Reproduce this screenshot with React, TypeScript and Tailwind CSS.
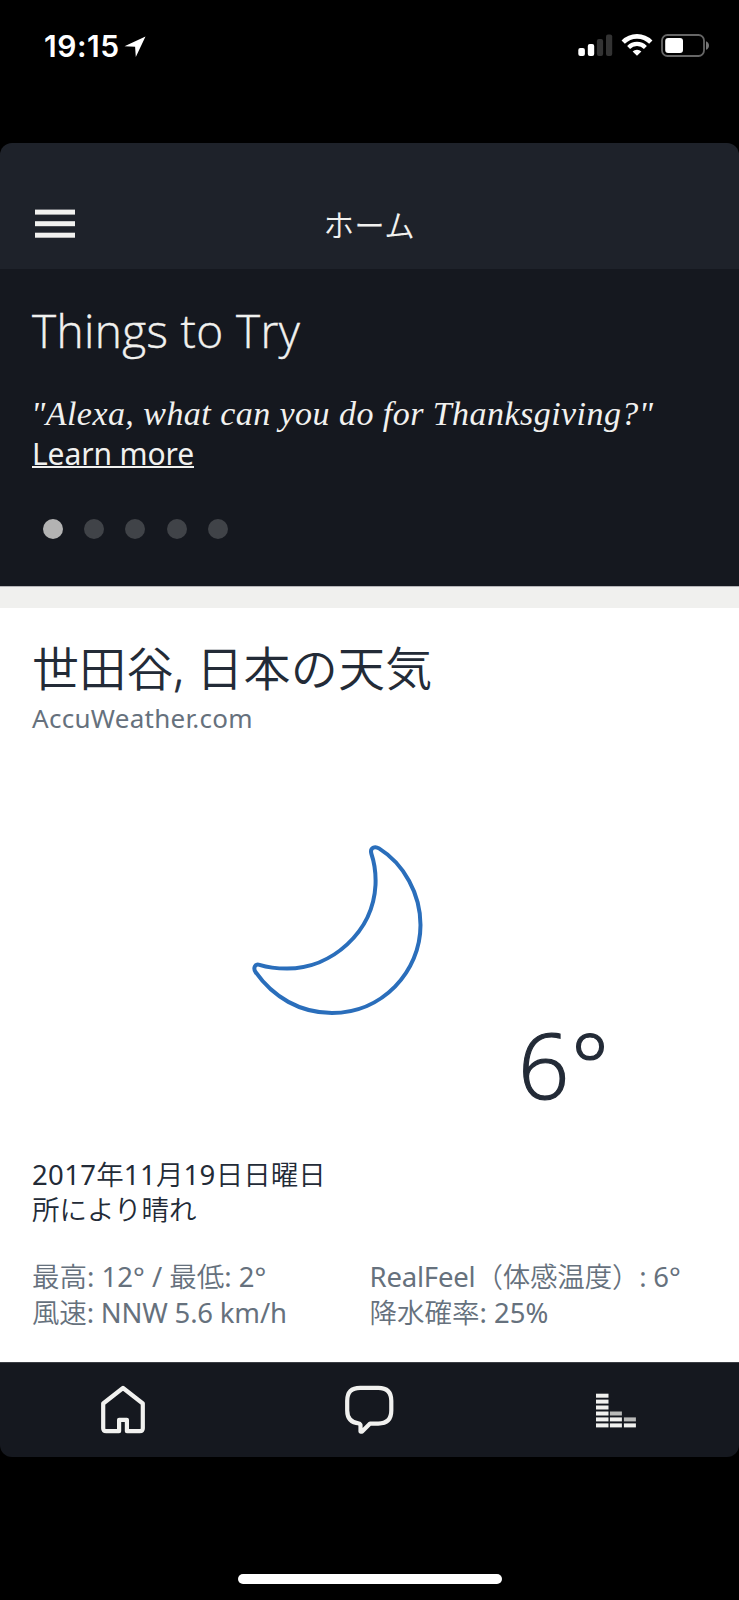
import React from "react";

const ember = "font-['Noto_Sans','Noto_Sans_CJK_JP',sans-serif]";
const light = "font-['Open_Sans','Noto_Sans_CJK_JP',sans-serif] font-[350]";

function StatusBar() {
  return (
    <div className="flex h-[143px] items-start justify-between pt-[34px] pr-[28px] pl-[44px]">
      <div className="flex items-center gap-[4px]">
        <span className="font-['Inter',sans-serif] text-[30px] leading-[24px] font-semibold tracking-[0.5px] text-white">
          19:15
        </span>
        <svg width="22" height="22" viewBox="0 0 22 22" fill="#fff">
          <path d="M21.5 1.5 11.8 22 11.1 11.8 0.5 11.2Z" />
        </svg>
      </div>
      <div className="flex items-start">
        <svg width="36" height="23" viewBox="0 0 36 23">
          <rect x="0.3" y="14" width="6.6" height="8" rx="2" fill="#fff" />
          <rect x="9.8" y="10" width="6.4" height="12" rx="2" fill="#fff" />
          <rect x="18.9" y="5" width="6.2" height="17" rx="2" fill="#333" />
          <rect x="28" y="0.6" width="6.2" height="21.4" rx="2" fill="#333" />
        </svg>
        <svg className="ml-[7px]" width="32" height="23" viewBox="0 0 32 23" fill="none" stroke="#fff">
          <path d="M2.2 8.2A19.3 19.3 0 0 1 29.8 8.2" strokeWidth="4.6" />
          <path d="M7.6 13.4A12 12 0 0 1 24.4 13.4" strokeWidth="4.2" />
          <path d="M16 21.8 11.6 17.5A6.2 6.2 0 0 1 20.4 17.5Z" fill="#fff" stroke="none" />
        </svg>
        <svg className="ml-[8px]" width="50" height="23" viewBox="0 0 50 23">
          <rect x="1" y="1" width="42" height="21" rx="5.5" fill="none" stroke="#666" strokeWidth="1.8" />
          <rect x="4.2" y="4" width="17.8" height="15" rx="3" fill="#fff" />
          <path d="M45 7.2c4 1.4 4 7.2 0 8.6Z" fill="#777" />
        </svg>
      </div>
    </div>
  );
}

function Header() {
  return (
    <header className="flex h-[126px] items-start bg-[#1e222a] pt-[66px] pl-[35px]">
      <svg width="40" height="30" viewBox="0 0 40 30" fill="#f1f1ef">
        <rect y="0.6" width="40" height="5" />
        <rect y="12.2" width="40" height="5" />
        <rect y="23.7" width="40" height="5" />
      </svg>
      <h1 className={`${light} ml-[248.5px] text-[30.5px] leading-[32px] tracking-[0.3px] whitespace-nowrap text-[#f1f1ef]`}>
        ホーム
      </h1>
    </header>
  );
}

function ThingsToTry() {
  return (
    <section className="h-[317px] bg-[#15181f] pt-[33px] pl-[32px] text-[#f1f1ef]">
      <h2 className={`${light} text-[46px] leading-[56px] tracking-[0.35px] whitespace-nowrap [-webkit-text-stroke:0.4px]`}>
        Things to Try
      </h2>
      <p className="mt-[36px] -ml-px font-['Liberation_Serif',serif] text-[34px] leading-[40px] tracking-[0.45px] whitespace-nowrap italic">
        "Alexa, what can you do for Thanksgiving?"
      </p>
      <p className={`${ember} -mt-px text-[30px] leading-[40px] tracking-[-0.1px]`}>
        <span className="inline-block h-[35px] border-b-2 border-[#f1f1ef] leading-[41px] whitespace-nowrap">
          Learn more
        </span>
      </p>
      <div className="mt-[45px] ml-[10.6px] flex gap-[21.4px]">
        <span className="size-[20px] rounded-full bg-[#b3b3b3]" />
        <span className="size-[20px] rounded-full bg-[#404348]" />
        <span className="size-[20px] rounded-full bg-[#404348]" />
        <span className="size-[20px] rounded-full bg-[#404348]" />
        <span className="size-[20px] rounded-full bg-[#404348]" />
      </div>
    </section>
  );
}

function Weather() {
  return (
    <section className="flex h-[754px] flex-col bg-white pt-[30px] pl-[32px]">
      <h2 className={`${light} text-[47px] leading-[60px] tracking-[0.2px] whitespace-nowrap text-[#232b37]`}>
        世田谷<span className="[-webkit-text-stroke:0.8px]">,</span> 日本の天気
      </h2>
      <p className={`${ember} mt-[2px] text-[26px] leading-[36px] tracking-[0.28px] whitespace-nowrap text-[#66717d]`}>
        AccuWeather.com
      </p>
      <svg className="mt-[94px] ml-[208px]" width="200" height="200" viewBox="0 0 200 200" fill="none" stroke="#2a6ebb" strokeWidth="4">
        <path d="M139 18.4C135 15.8 129.8 17.5 131.3 23.5C134.5 33 136 44 135.5 55C133 102 92 138.5 47 138.5C38 138.5 28 137.5 19.5 134.8C15 133.5 13 138 15.5 142C33 167 60 183 92 183C142 183 180.5 142 180.5 95C180.5 64 164 34 139 18.4Z" />
      </svg>
      <div className="mt-[-25px] flex h-[119px] pl-[486px]">
        <span className={`${light} text-[90px] leading-[119px] tracking-[1.5px] text-[#232b37] [-webkit-text-stroke:1.2px]`}>6°</span>
      </div>
      <div className={`${ember} mt-[32.5px] text-[27.5px] leading-[35.5px] whitespace-nowrap text-[#232b37]`}>
        <p className="tracking-[0.35px]">
          2017<span className="font-[350] tracking-normal">年</span>11
          <span className="font-[350] tracking-normal">月</span>19
          <span className="font-[350] tracking-normal">日日曜日</span>
        </p>
        <p className="font-[350]">所により晴れ</p>
      </div>
      <div className={`${ember} mt-[31.5px] grid grid-cols-[337.5px_1fr] text-[27.5px] leading-[35.5px] whitespace-nowrap text-[#66717d]`}>
        <p><span className="font-[350]">最高</span>: 12° / <span className="font-[350]">最低</span>: 2°</p>
        <p className="tracking-[-0.2px]">RealFeel<span className="font-[350]">（体感温度）</span>: 6°</p>
        <p className="tracking-[-0.18px]"><span className="font-[350]">風速</span>: NNW 5.6 km/h</p>
        <p><span className="font-[350]">降水確率</span>: 25%</p>
      </div>
    </section>
  );
}

function BottomNav() {
  return (
    <nav className="grid h-[95px] grid-cols-3 justify-items-center border-t border-[#3b3e44] bg-[#15181f] pt-[21px]">
      <svg width="50" height="52" viewBox="0 0 50 52" fill="none" stroke="#f1f1ef" strokeWidth="4.2" strokeLinejoin="round">
        <path d="M21.1 47.2H8.2Q5.2 47.2 5.2 44.2V19.5L25 4L44.8 19.5V44.2Q44.8 47.2 41.8 47.2H28.9V35.8H21.1Z" />
      </svg>
      <svg width="52" height="52" viewBox="0 0 52 52" fill="none" stroke="#f1f1ef" strokeWidth="4.2" strokeLinejoin="round">
        <path d="M17.2 3.8H35.3Q48.3 3.8 48.3 16.8V26.6Q48.3 39.6 35.3 39.6H27.1L19.1 47.6H17.5V41L16.2 39.5Q4.2 38.6 4.2 26.6V16.8Q4.2 3.8 17.2 3.8Z" />
      </svg>
      <svg width="42" height="52" viewBox="0 0 42 52" fill="#f1f1ef">
        <rect x="1" y="9.7" width="12.5" height="4" />
        <rect x="1" y="15.6" width="12.5" height="4" />
        <rect x="1" y="21.5" width="12.5" height="4" />
        <rect x="1" y="27.5" width="12.5" height="4" />
        <rect x="1" y="33.4" width="12.5" height="4" />
        <rect x="1" y="39.4" width="12.5" height="4" />
        <rect x="14.9" y="27.5" width="12" height="4" fill="#b9bab9" />
        <rect x="14.9" y="33.4" width="12" height="4" />
        <rect x="14.9" y="39.4" width="12" height="4" />
        <rect x="28.9" y="33.4" width="12" height="4" fill="#b9bab9" />
        <rect x="28.9" y="39.4" width="12" height="4" />
      </svg>
    </nav>
  );
}

export default function App() {
  return (
    <div className="flex h-[1600px] w-[739px] flex-col overflow-hidden bg-black">
      <StatusBar />
      <main className="flex h-[1314px] flex-col overflow-hidden rounded-[12px]">
        <Header />
        <ThingsToTry />
        <div className="h-[22px] border-t border-[#b5b5b8] bg-[#f0f0ee]" />
        <Weather />
        <BottomNav />
      </main>
      <div className="mt-[117px] ml-[238px] h-[10px] w-[264px] rounded-full bg-white" />
    </div>
  );
}
